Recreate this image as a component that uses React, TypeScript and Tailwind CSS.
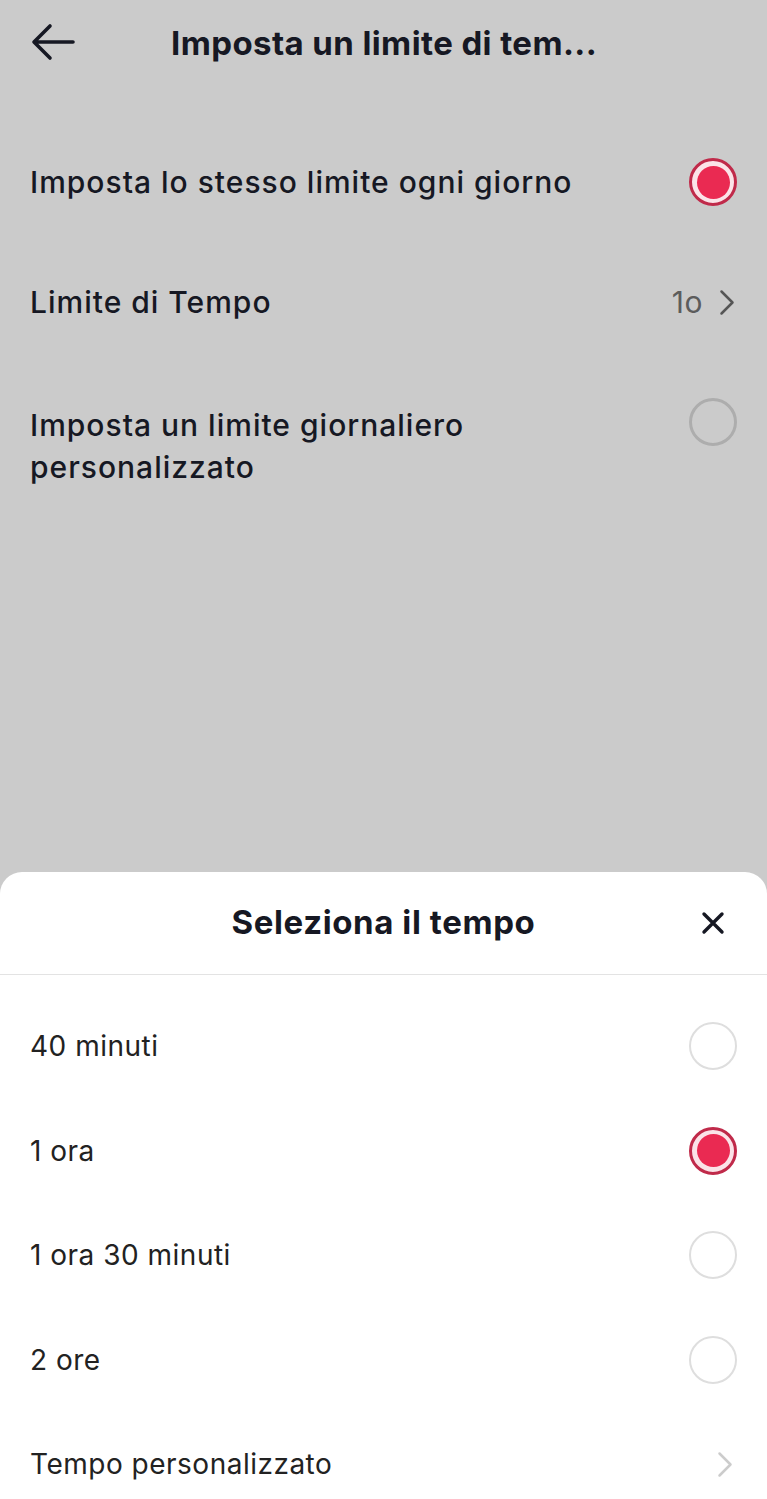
const options = [
  { label: "40 minuti", selected: false },
  { label: "1 ora", selected: true },
  { label: "1 ora 30 minuti", selected: false },
  { label: "2 ore", selected: false },
];

const Radio = ({ on, light }: { on: boolean; light?: boolean }) => {
  if (on) {
    return (
      <div className="w-[48px] h-[48px] rounded-full border-[3px] border-[#c02a4a] flex items-center justify-center bg-[#fbe3e8]">
        <div className="w-[33px] h-[33px] rounded-full bg-[#ea2a52]" />
      </div>
    );
  }
  return (
    <div
      className={
        light
          ? "w-[48px] h-[48px] rounded-full border-[2.5px] border-[#dedede]"
          : "w-[48px] h-[48px] rounded-full border-[3px] border-[#adadad]"
      }
    />
  );
};

const Chevron = ({ className }: { className: string }) => (
  <svg width="16" height="27" viewBox="0 0 16 27" fill="none" className={className}>
    <path d="M2.5 2.5 L13.5 13.5 L2.5 24.5" stroke="currentColor" strokeWidth="2.5" strokeLinecap="round" strokeLinejoin="round" />
  </svg>
);

const App = () => {
  return (
    <div className="w-[767px] h-[1499px] bg-[#cbcbcb] flex flex-col overflow-hidden font-['Inter',sans-serif] text-[#161823]">
      {/* header */}
      <div className="h-[88px] shrink-0 flex items-center px-[31px]">
        <svg width="44" height="38" viewBox="0 0 44 38" fill="none" className="mt-[-4px]">
          <path d="M42 19 H4 M19 3 L3 19 L19 35" stroke="#161823" strokeWidth="3.6" strokeLinecap="round" strokeLinejoin="round" />
        </svg>
        <h1 className="ml-[96px] text-[33px] font-bold tracking-[0.4px]">
          Imposta un limite di tem...
        </h1>
      </div>

      <div className="flex flex-col px-[30px] mt-[34px] shrink-0">
        <div className="h-[120px] flex items-center justify-between">
          <span className="text-[30px] font-medium tracking-[1px]">Imposta lo stesso limite ogni giorno</span>
          <Radio on />
        </div>
        <div className="h-[121px] flex items-center justify-between">
          <span className="text-[30px] font-medium tracking-[1px]">Limite di Tempo</span>
          <div className="flex items-center gap-[16px] text-[#5c5c5c] mr-[2px]">
            <span className="text-[30px] tracking-[0.5px]">1o</span>
            <Chevron className="text-[#555555]" />
          </div>
        </div>
        <div className="flex justify-between pt-[41px]">
          <span className="text-[30px] font-medium tracking-[1px] leading-[42px] w-[500px]">
            Imposta un limite giornaliero personalizzato
          </span>
          <div className="mt-[-6px]">
            <Radio on={false} />
          </div>
        </div>
      </div>

      {/* bottom sheet */}
      <div className="mt-auto h-[627px] shrink-0 bg-white rounded-t-[22px] flex flex-col">
        <div className="h-[103px] shrink-0 flex items-center justify-center relative border-b border-[#e3e3e3]">
          <h2 className="text-[33px] font-bold tracking-[0.6px]">Seleziona il tempo</h2>
          <svg width="24" height="24" viewBox="0 0 24 24" fill="none" className="absolute right-[42px]">
            <path d="M3 3 L21 21 M21 3 L3 21" stroke="#161823" strokeWidth="3.4" strokeLinecap="round" />
          </svg>
        </div>
        <div className="flex flex-col px-[30px] pt-[19px]">
          {options.map((o) => (
            <div key={o.label} className="h-[104.5px] shrink-0 flex items-center justify-between">
              <span className="text-[28px] tracking-[0.5px] text-[#222222]">{o.label}</span>
              <Radio on={o.selected} light />
            </div>
          ))}
          <div className="h-[104.5px] shrink-0 flex items-center justify-between">
            <span className="text-[28px] tracking-[0.5px] text-[#222222]">Tempo personalizzato</span>
            <Chevron className="text-[#cccccc] mr-[4px]" />
          </div>
        </div>
      </div>
    </div>
  );
};

export default App;
